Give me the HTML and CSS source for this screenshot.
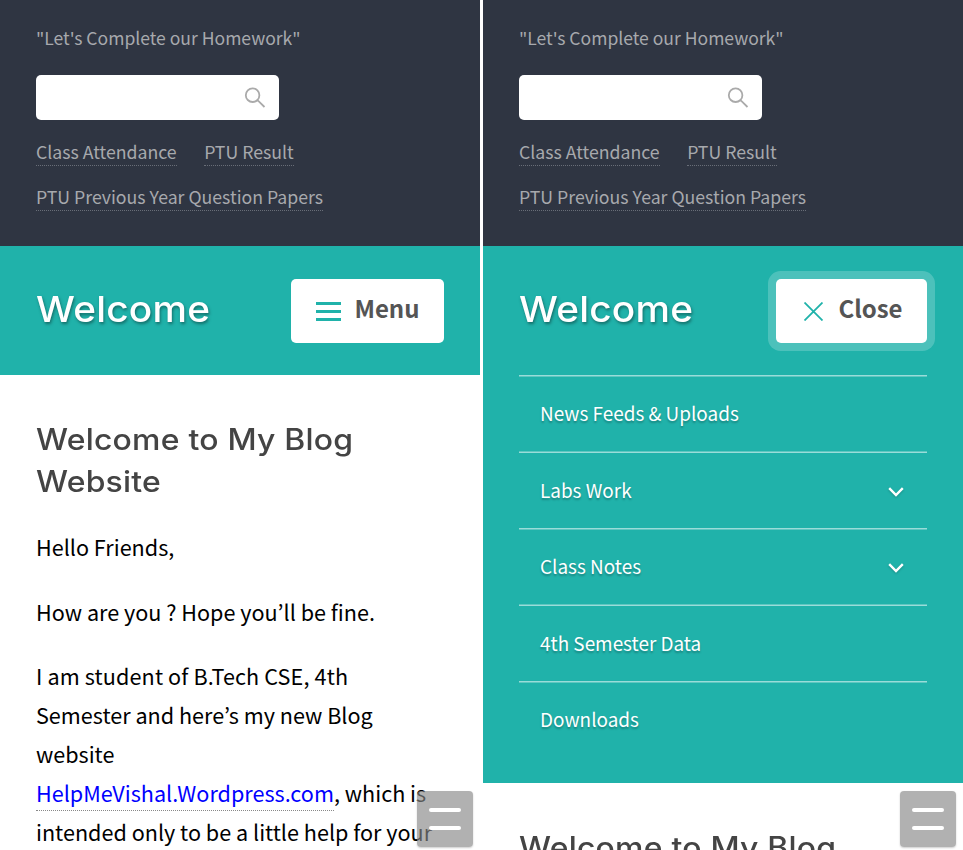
FILE: index.html
```html
<!DOCTYPE html>
<html lang="en">
<head>
<meta charset="utf-8">
<title>Welcome</title>
<link rel="stylesheet" href="styles.css">
</head>
<body>
<div class="screens">
  <section class="screen">
    <header class="top">
      <p class="tagline">"Let's Complete our Homework"</p>
      <div class="search"><svg width="22" height="22" viewBox="0 0 22 22"><circle cx="8.6" cy="8.2" r="6.8"/><path d="M13.300 13.200l1.500 1.200 5.700 5.600"/></svg></div>
      <nav class="links"><a>Class Attendance</a><a>PTU Result</a><a>PTU Previous Year Question Papers</a></nav>
    </header>
    <div class="brand">
      <div class="bar">
        <h1>Welcome</h1>
        <button class="toggle"><svg class="burger" width="25" height="19" viewBox="0 0 25 19"><path d="M0 1.500h25M0 9.500h25M0 17.500h25"/></svg><span>Menu</span></button>
      </div>
    </div>
    <article>
      <h2>Welcome to My Blog<br>Website</h2>
      <p>Hello Friends,</p>
      <p>How are you ? Hope you’ll be fine.</p>
      <p><span class="loose">I am student of B.Tech CSE, 4th</span><br>Semester and here’s my new Blog<br>website<br><a>HelpMeVishal.Wordpress.com</a>, which is<br>intended only to be a little help for your</p>
    </article>
    <div class="fab"><i></i><i></i></div>
  </section>
  <section class="screen">
    <header class="top">
      <p class="tagline">"Let's Complete our Homework"</p>
      <div class="search"><svg width="22" height="22" viewBox="0 0 22 22"><circle cx="8.6" cy="8.2" r="6.8"/><path d="M13.300 13.200l1.500 1.200 5.700 5.600"/></svg></div>
      <nav class="links"><a>Class Attendance</a><a>PTU Result</a><a>PTU Previous Year Question Papers</a></nav>
    </header>
    <div class="brand open">
      <div class="bar">
        <h1>Welcome</h1>
        <button class="toggle close"><svg class="cross" width="19" height="19" viewBox="0 0 19 19"><path d="M.5.5l18 18M18.500.5l-18 18"/></svg><span>Close</span></button>
      </div>
      <ul class="menu">
        <li><span>News Feeds &amp; Uploads</span></li>
        <li><span>Labs Work</span><svg width="16" height="10" viewBox="0 0 16 10"><path d="M1.200 1.200L8 8l6.800-6.800"/></svg></li>
        <li><span>Class Notes</span><svg width="16" height="10" viewBox="0 0 16 10"><path d="M1.200 1.200L8 8l6.800-6.800"/></svg></li>
        <li><span>4th Semester Data</span></li>
        <li><span>Downloads</span></li>
      </ul>
    </div>
    <article>
      <h2>Welcome to My Blog</h2>
    </article>
    <div class="fab"><i></i><i></i></div>
  </section>
</div>
</body>
</html>
```
FILE: styles.css
```css
* { box-sizing: border-box; margin: 0; padding: 0; }
body {
  background: #fff;
  font-family: "Noto Sans CJK KR", "Noto Sans", sans-serif;
  overflow: hidden;
}
.screens { display: grid; grid-template-columns: 480px 480px; column-gap: 3px; height: 850px; }
.screen { position: relative; height: 850px; overflow: hidden; background: #fff; }
.top { height: 246px; padding: 15px 36px 0; background: #2f3542; color: #a7a9ad; font-size: 17.7px; }
.tagline { height: 45px; line-height: 45px; font-size: 17.55px; white-space: nowrap; }
.search {
  display: flex; justify-content: flex-end; align-items: center;
  width: 243px; height: 45px; margin-top: 15px; padding-right: 13px;
  border-radius: 5px; background: #fff;
}
.search svg { fill: none; stroke: #aaa; stroke-width: 1.8; }
.links { display: flex; flex-wrap: wrap; column-gap: 27.5px; row-gap: 19px; padding-top: 20px; }
.links a { height: 26px; line-height: 23px; border-bottom: 1px dotted #696e78; white-space: nowrap; }
.brand { height: 129px; padding: 0 36px; background: #20b2aa; }
.brand.open { height: 537px; }
.bar { display: flex; justify-content: space-between; height: 129px; padding-top: 33px; }
h1 {
  height: 60px; font: 500 36px/60px Inter, sans-serif; letter-spacing: .2px; color: #fff;
  transform: scaleX(1.078); transform-origin: left;
  text-shadow: 1px 2px 3px rgba(0,0,0,.4);
}
.toggle {
  display: flex; align-items: center; justify-content: flex-end; width: 153px; height: 64px; padding: 0 24.5px 6px 0;
  border: 0; border-radius: 5px; background: #fff; color: #555;
  font: 700 24px/58px "Noto Sans CJK KR", sans-serif;
}
.toggle svg { fill: none; stroke: #20b2aa; margin-top: 7px; }
.burger { stroke-width: 3; margin-right: 13.5px; }
.cross { stroke-width: 1.8; margin-right: 15.5px; }
.toggle.close { width: 151px; box-shadow: 0 0 0 8px rgba(255,255,255,.2); }
.menu { list-style: none; }
.menu li {
  display: flex; align-items: center; justify-content: space-between;
  height: 76px; padding: 0 23px 3px 21px;
  border-top: 1px solid rgba(255,255,255,.55); box-shadow: inset 0 1px rgba(255,255,255,.28);
  color: #fff; font-size: 18.93px; font-weight: 400; text-shadow: 0 2px 2px rgba(0,0,0,.25);
}
.menu li:nth-child(even) {
  height: 77px; padding-bottom: 2px;
  border-top-color: rgba(255,255,255,.28); box-shadow: inset 0 1px rgba(255,255,255,.55);
}
.menu svg { fill: none; stroke: #fff; stroke-width: 2.4; margin-top: 6px; filter: drop-shadow(0 1px 1px rgba(0,0,0,.2)); }
.menu li:nth-child(even) svg { margin-top: 5px; }
article { padding: 43px 36px 0; white-space: nowrap; }
h2 {
  margin-bottom: -1px; font: 500 29.5px/42px Inter, sans-serif; letter-spacing: .2px; color: #444;
  transform: scaleX(1.083); transform-origin: left;
}
article p { margin-top: 26px; font-size: 21.6px; line-height: 39px; color: #000; }
article p + p + p { margin-top: 25px; }
article a { padding-bottom: 2px; border-bottom: 1px dotted #888; color: #00f; }
.loose { letter-spacing: .12px; }
.fab {
  position: absolute; right: 7px; bottom: 3px; width: 56px; height: 56px;
  display: flex; flex-direction: column; align-items: center; justify-content: center; gap: 14px;
  border-radius: 4px; background: rgba(135,135,135,.65); box-shadow: 0 1px 2px rgba(0,0,0,.2);
}
.fab i { width: 32px; height: 4px; border-radius: 2px; background: #fff; }
```
